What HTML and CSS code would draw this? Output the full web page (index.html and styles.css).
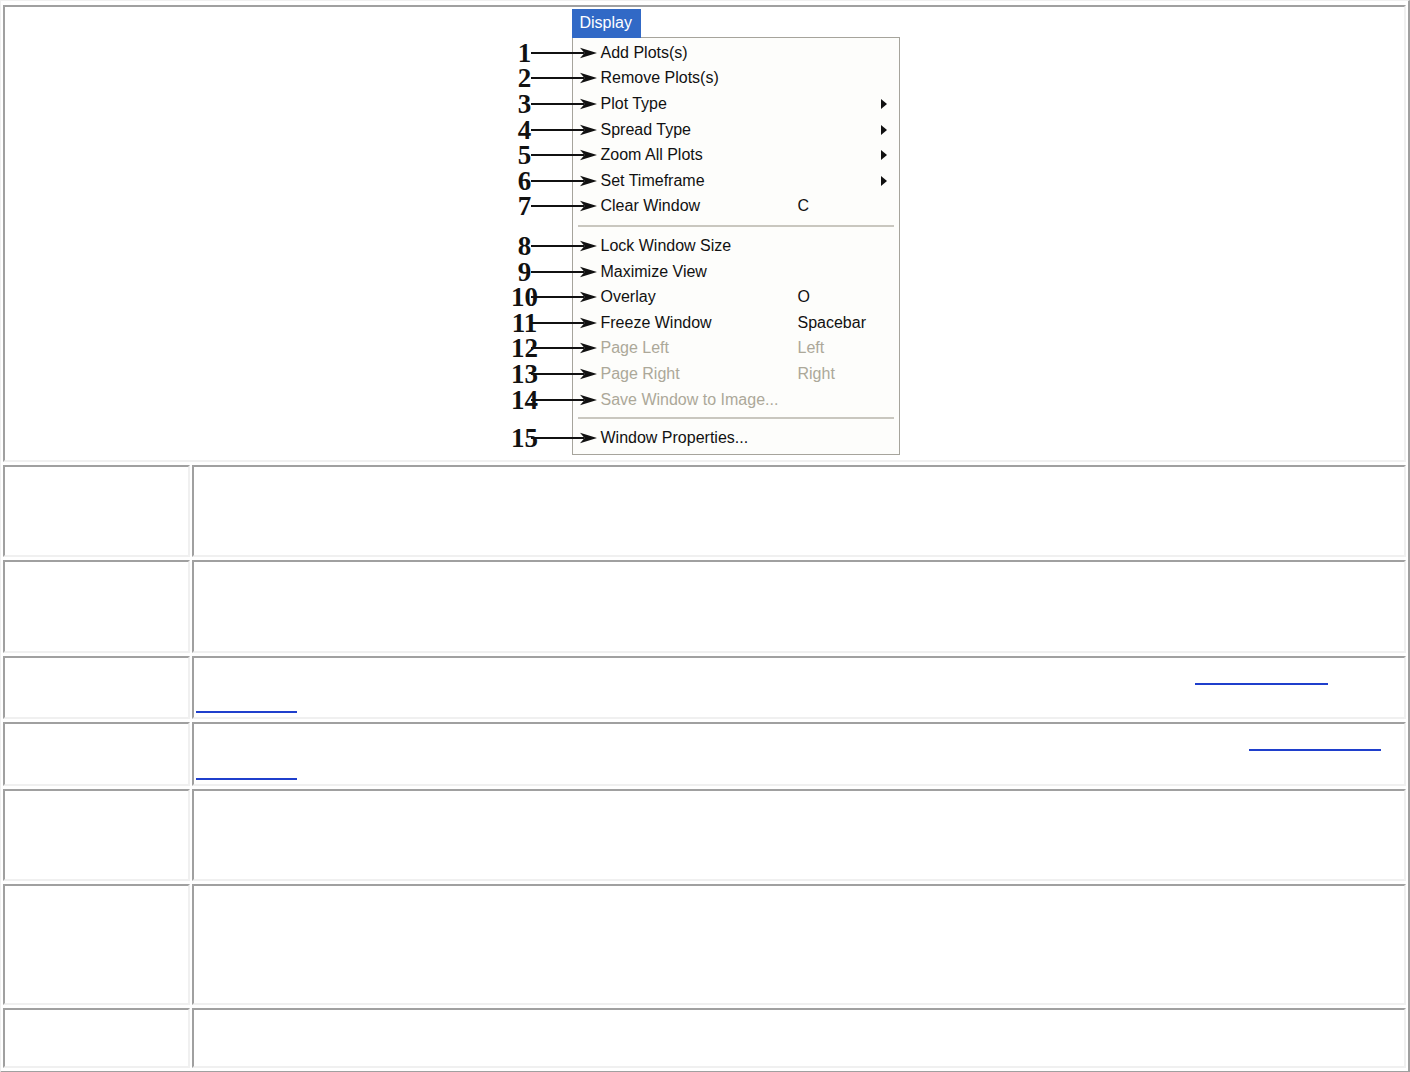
FILE: index.html
```html
<!DOCTYPE html>
<html lang="en">
<head>
<meta charset="utf-8">
<title>Display Menu</title>
<link rel="stylesheet" href="styles.css">
</head>
<body>
<svg class="defs" width="0" height="0" aria-hidden="true">
  <symbol id="arr" viewBox="0 0 66 12">
    <line x1="0" y1="6" x2="53" y2="6" stroke="#111" stroke-width="2.2"/>
    <polygon points="66,6 49,0.8 53.5,6 49,11.2" fill="#111"/>
  </symbol>
</svg>
<table class="doc">
  <tr>
    <td class="fig-cell" colspan="2">
      <div class="figure">
        <div class="tab">Display</div>
        <div class="menu">
          <div class="item"><span class="callout"><span class="num">1</span><svg class="arrow"><use href="#arr"/></svg></span><span class="lbl">Add Plots(s)</span></div>
          <div class="item"><span class="callout"><span class="num">2</span><svg class="arrow"><use href="#arr"/></svg></span><span class="lbl">Remove Plots(s)</span></div>
          <div class="item"><span class="callout"><span class="num">3</span><svg class="arrow"><use href="#arr"/></svg></span><span class="lbl">Plot Type</span><span class="sub"></span></div>
          <div class="item"><span class="callout"><span class="num">4</span><svg class="arrow"><use href="#arr"/></svg></span><span class="lbl">Spread Type</span><span class="sub"></span></div>
          <div class="item"><span class="callout"><span class="num">5</span><svg class="arrow"><use href="#arr"/></svg></span><span class="lbl">Zoom All Plots</span><span class="sub"></span></div>
          <div class="item"><span class="callout"><span class="num">6</span><svg class="arrow"><use href="#arr"/></svg></span><span class="lbl">Set Timeframe</span><span class="sub"></span></div>
          <div class="item"><span class="callout"><span class="num">7</span><svg class="arrow"><use href="#arr"/></svg></span><span class="lbl">Clear Window</span><span class="key">C</span></div>
          <div class="sep"></div>
          <div class="item"><span class="callout"><span class="num">8</span><svg class="arrow"><use href="#arr"/></svg></span><span class="lbl">Lock Window Size</span></div>
          <div class="item"><span class="callout"><span class="num">9</span><svg class="arrow"><use href="#arr"/></svg></span><span class="lbl">Maximize View</span></div>
          <div class="item"><span class="callout"><span class="num">10</span><svg class="arrow"><use href="#arr"/></svg></span><span class="lbl">Overlay</span><span class="key">O</span></div>
          <div class="item"><span class="callout"><span class="num">11</span><svg class="arrow"><use href="#arr"/></svg></span><span class="lbl">Freeze Window</span><span class="key">Spacebar</span></div>
          <div class="item off"><span class="callout"><span class="num">12</span><svg class="arrow"><use href="#arr"/></svg></span><span class="lbl">Page Left</span><span class="key">Left</span></div>
          <div class="item off"><span class="callout"><span class="num">13</span><svg class="arrow"><use href="#arr"/></svg></span><span class="lbl">Page Right</span><span class="key">Right</span></div>
          <div class="item off"><span class="callout"><span class="num">14</span><svg class="arrow"><use href="#arr"/></svg></span><span class="lbl">Save Window to Image...</span></div>
          <div class="sep sep2"></div>
          <div class="item"><span class="callout"><span class="num">15</span><svg class="arrow"><use href="#arr"/></svg></span><span class="lbl">Window Properties...</span></div>
        </div>
      </div>
    </td>
  </tr>
  <tr>
    <td class="term"></td>
    <td class="desc"><div class="ln"></div><div class="ln"></div><div class="ln"></div></td>
  </tr>
  <tr>
    <td class="term"></td>
    <td class="desc"><div class="ln"></div><div class="ln"></div><div class="ln"></div></td>
  </tr>
  <tr>
    <td class="term"></td>
    <td class="desc"><div class="ln"><a class="ref r4a" href="#"></a></div><div class="ln"><a class="ref rwrap" href="#"></a></div></td>
  </tr>
  <tr>
    <td class="term"></td>
    <td class="desc"><div class="ln"><a class="ref r5a" href="#"></a></div><div class="ln"><a class="ref rwrap" href="#"></a></div></td>
  </tr>
  <tr>
    <td class="term"></td>
    <td class="desc"><div class="ln"></div><div class="ln"></div><div class="ln"></div></td>
  </tr>
  <tr>
    <td class="term"></td>
    <td class="desc"><div class="ln"></div><div class="ln"></div><div class="ln"></div><div class="ln"></div></td>
  </tr>
  <tr>
    <td class="term"></td>
    <td class="desc"><div class="ln short"></div><div class="ln short"></div></td>
  </tr>
</table>
</body>
</html>
```

FILE: styles.css
```css
html, body {
  margin: 0;
  padding: 0;
  overflow: hidden;
  background: #fff;
}

body {
  font-family: "Liberation Serif", "Times New Roman", serif;
  color: #000;
}

.defs {
  position: absolute;
  width: 0;
  height: 0;
  overflow: hidden;
}

.doc {
  width: 100%;
  box-sizing: border-box;
  border-collapse: separate;
  border-spacing: 2px 3px;
  border-style: solid;
  border-width: 1px 2px 2px 1px;
  border-color: #f0f0f0 #a0a0a0 #a0a0a0 #f0f0f0;
  padding-top: 1px;
}

.doc td {
  border-style: solid;
  border-width: 2px;
  border-color: #a0a0a0 #f0f0f0 #f0f0f0 #a0a0a0;
  padding: 1px;
  vertical-align: top;
}

.doc td.term {
  width: 187px;
  box-sizing: border-box;
}

.ln {
  height: 28.75px;
}

.ln.short {
  height: 27px;
}

.ref {
  display: block;
  height: 24px;
  border-bottom: 2px solid #1f3fcc;
}

.r4a {
  margin-left: 1000px;
  width: 133px;
}

.r5a {
  margin-left: 1054px;
  width: 132px;
}

.rwrap {
  margin-left: 1px;
  width: 101px;
}

/* menu figure */
.figure {
  width: 400px;
  height: 450px;
  margin: 0 auto;
  font-family: "Liberation Sans", Arial, sans-serif;
  font-size: 16px;
}

.tab {
  position: relative;
  z-index: 1;
  margin: 1px 0 -1px 67px;
  width: 69px;
  height: 29px;
  box-sizing: border-box;
  padding-left: 8px;
  line-height: 27px;
  background: #3169c6;
  color: #fff;
}

.menu {
  margin-left: 67px;
  width: 328px;
  box-sizing: border-box;
  border: 1px solid #a6a49c;
  background: #fdfdfb;
  padding: 2px 0 3px;
}

.item {
  position: relative;
  display: flex;
  align-items: center;
  height: 25.6px;
  padding-left: 28px;
  color: #111;
  white-space: nowrap;
}

.item.off {
  color: #aca899;
}

.lbl {
  flex: none;
  width: 197px;
}

.key {
  flex: none;
}

.sub {
  flex: none;
  margin-left: auto;
  margin-right: 12px;
  width: 0;
  height: 0;
  border-left: 6px solid #111;
  border-top: 5px solid transparent;
  border-bottom: 5px solid transparent;
}

.sep {
  height: 2px;
  margin: 6px 5px;
  background: #c9c7bf;
}

.sep.sep2 {
  margin: 5px 5px 6.3px;
}

.callout {
  position: absolute;
  left: -62px;
  top: 0;
  height: 100%;
  display: flex;
  align-items: center;
  color: #111;
}

.num {
  flex: none;
  width: 28px;
  text-align: center;
  font-family: "Liberation Serif", "Times New Roman", serif;
  font-size: 27px;
  font-weight: bold;
  line-height: 20px;
}

.arrow {
  flex: none;
  width: 66px;
  height: 12px;
  margin-left: -8px;
}
```
